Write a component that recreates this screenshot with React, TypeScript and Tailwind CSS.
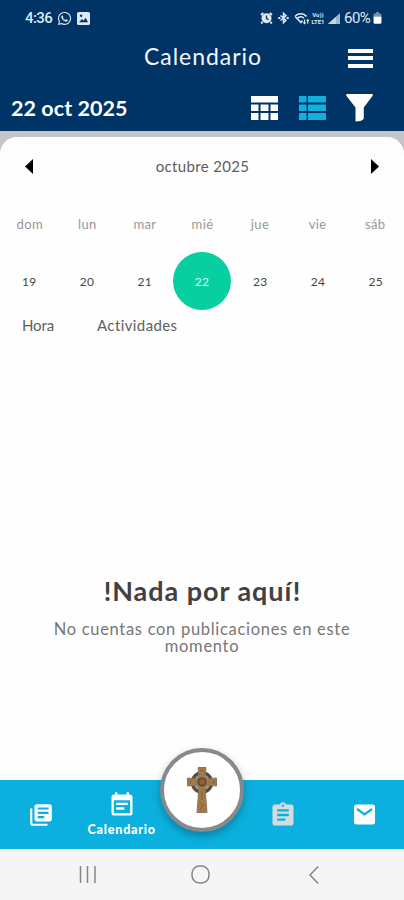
import React from 'react';
import { MdAssignment, MdEventNote, MdLibraryBooks } from 'react-icons/md';
import { FaWhatsapp } from 'react-icons/fa';

const weekDays = ['dom', 'lun', 'mar', 'mié', 'jue', 'vie', 'sáb'];
const days = [19, 20, 21, 22, 23, 24, 25];
const selectedDay = 22;

// Android status bar
const StatusBar: React.FC = () => (
  <div className="flex h-9 items-center justify-between pl-[25px] pr-[22px] text-[#dfe8f5]">
    <div className="flex items-center gap-[5px]">
      <span className="w-[27px] whitespace-nowrap font-['Roboto',sans-serif] text-[15px] font-medium tracking-[-0.6px]">4:36</span>
      <FaWhatsapp className="size-[15px]" />
      <svg className="size-[13px]" viewBox="0 0 12 12">
        <rect width="12" height="12" rx="1.5" fill="currentColor" />
        <path d="M2 9.5 4.6 6.5 6 8 8 5.2 10.2 9.5Z" fill="#003366" />
        <circle cx="3.8" cy="3.5" r="1.1" fill="#003366" />
      </svg>
    </div>
    <div className="flex items-center">
      <svg className="mr-[5px] h-3 w-[13px]" viewBox="0 0 13 12" fill="none" stroke="currentColor">
        <circle cx="6.5" cy="6.3" r="5" fill="currentColor" stroke="none" />
        <path d="M1 3 3.3 1M12 3 9.7 1M2.5 10 1.2 11.5M10.5 10 11.8 11.5" strokeWidth="2" />
        <path d="M6.5 3.5V6.7L8.5 7.7" stroke="#003366" strokeWidth="1.3" />
      </svg>
      <svg className="mr-[5px] h-3 w-[11px]" viewBox="0 0 11 12" fill="none" stroke="currentColor" strokeWidth="1.5">
        <path d="M2.5 3.5 8 8.2 5.5 10.7V1.3L8 3.8 2.5 8.5" />
        <path d="M.3 6h2M8.7 6h2" strokeWidth="2" />
      </svg>
      <svg className="h-[13px] w-4" viewBox="0 0 16 13" fill="none" stroke="currentColor" strokeWidth="1.5">
        <path d="M1 4.5C4 .8 9.5.8 12.5 4.5M3.2 6.5C5.2 4.2 8.3 4.2 10 6.3M1 4.5 7 10.5 8.5 8.5" />
        <path d="M10.5 7.5v4M9.3 10.3l1.2 1.4 1.2-1.4M13.8 11.8v-4M12.6 9l1.2-1.4L15 9" strokeWidth="1.1" />
      </svg>
      <div className="flex w-4 flex-col items-center font-['Roboto',sans-serif] text-[6px] font-bold leading-[7.5px]">
        <span>Vo))</span>
        <span>LTE1</span>
      </div>
      <svg className="ml-[2px] h-[11px] w-3" viewBox="0 0 12 11">
        <path d="M0 11 12 0V11Z" fill="#9fb3c9" />
        <path d="M0 11 8 3.7V11Z" fill="#c8d4e2" />
      </svg>
      <span className="ml-1 w-[28px] whitespace-nowrap font-['Roboto',sans-serif] text-[15px] tracking-[-0.5px]">60%</span>
      <svg className="ml-px h-3 w-[9px]" viewBox="0 0 9 13">
        <path d="M3 0h3v1.5h1.5a1.3 1.3 0 0 1 1.3 1.3V5H.2V2.8a1.3 1.3 0 0 1 1.3-1.3H3Z" fill="#7890ab" />
        <path d="M.2 5h8.6v6.3A1.5 1.5 0 0 1 7.3 12.8H1.7A1.5 1.5 0 0 1 .2 11.3Z" fill="#fff" />
      </svg>
    </div>
  </div>
);

const Header: React.FC = () => (
  <header className="h-[131px] bg-[#003366] text-white">
    <StatusBar />
    <div className="grid h-11 grid-cols-[1fr_auto_1fr] items-center">
      <span />
      <h1 className="pb-1 pl-[2px] text-[23px] leading-7 tracking-[0.95px] text-[#f3f6fb]">Calendario</h1>
      <div className="mr-[31px] flex w-[25px] flex-col gap-[3.5px] justify-self-end [&>span]:h-1 [&>span]:bg-white">
        <span />
        <span />
        <span />
      </div>
    </div>
    <div className="flex h-14 items-center pl-[11px] pr-[31px]">
      <span className="grow pt-px text-[21.5px] font-bold tracking-[0.05px]">22 oct 2025</span>
      <svg className="h-6 w-[27px]" viewBox="0 0 27 24" fill="currentColor">
        <path d="M0 0h27v6.5H0zM0 8.5h7.5v6.5H0zM9.5 8.5h8v6.5h-8zM19.5 8.5H27v6.5h-7.5zM0 17h7.5v7H0zM9.5 17h8v7h-8zM19.5 17H27v7h-7.5z" />
      </svg>
      <svg className="ml-[21px] h-6 w-[27px]" viewBox="0 0 27 24" fill="#13aeda">
        <path d="M0 0h7.5v6.5H0zM9 0h18v6.5H9zM0 8.5h7.5v6.5H0zM9 8.5h18v6.5H9zM0 17h7.5v7H0zM9 17h18v7H9z" />
      </svg>
      <svg className="ml-5 h-7 w-[27px]" viewBox="0 0 27 28" fill="currentColor">
        <path d="M1 0H26Q27.5.5 26.5 2L17.8 13.5V24.5Q16.5 27.5 9.5 27.5V13.5L.5 2Q-.5.5 1 0Z" />
      </svg>
    </div>
  </header>
);

const WeekCalendar: React.FC = () => (
  <section>
    <div className="flex h-[58px] items-center justify-between px-[25px] text-black">
      <svg className="h-[15px] w-2" viewBox="0 0 8 15">
        <path d="M8 0V15L0 7.5Z" fill="currentColor" />
      </svg>
      <span className="pl-px text-[15px] tracking-[0.35px] text-[#5d5d5d]">octubre 2025</span>
      <svg className="h-[15px] w-2" viewBox="0 0 8 15">
        <path d="M0 0V15L8 7.5Z" fill="currentColor" />
      </svg>
    </div>
    <div className="grid h-[57px] grid-cols-7 items-center pl-px pt-[2px] text-center text-[13px] tracking-[0.4px] text-[#989898]">
      {weekDays.map((name) => (
        <span key={name}>{name}</span>
      ))}
    </div>
    <div className="grid grid-cols-7 text-[12px] tracking-[0.3px] text-[#444]">
      {days.map((day) => (
        <div
          key={day}
          className={
            day === selectedDay
              ? 'flex aspect-square items-center justify-center rounded-full bg-[#08cf9f] pt-[2px] text-[#dcfff5]'
              : 'flex aspect-square items-center justify-center pl-px pt-[2px]'
          }
        >
          {day}
        </div>
      ))}
    </div>
    <div className="flex h-[31px] items-center pl-[22px] text-[15px] text-[#606060]">
      <span className="w-[75px] tracking-[-0.1px]">Hora</span>
      <span className="tracking-[0.4px]">Actividades</span>
    </div>
  </section>
);

const CelticCross: React.FC = () => (
  <svg className="h-[46px] w-[30px]" viewBox="0 0 30 46">
    <circle cx="15" cy="15.5" r="9.8" fill="#a0a0a0" stroke="#574a3c" strokeWidth="3" />
    <path
      d="M11 .5h8l-1 9 2.5 2.5 9-1v8l-9-1-2.5 2.5 2 25H10l2-25L9.5 18l-9 1v-8l9 1 2.5-2.5Z"
      fill="#a27a4a"
      stroke="#8a7358"
      strokeWidth="1"
    />
    <circle cx="15" cy="15" r="3.8" fill="#8c6238" stroke="#594634" strokeWidth="1.5" />
    <path d="M13 3.5h4M3.5 13v4M26.5 13v4M15 24v9M13 36l3 3-3 3" fill="none" stroke="#8a653c" strokeWidth="1.3" />
  </svg>
);

const BottomNav: React.FC = () => (
  <nav className="relative grid h-[69px] grid-cols-5 bg-[#0cb0de] text-white">
    <div className="flex items-center justify-center pl-px">
      <MdLibraryBooks className="size-[26px]" />
    </div>
    <div className="flex flex-col items-center pl-px pt-[11px]">
      <MdEventNote className="size-[28px]" />
      <span className="mt-1 text-[12.5px] font-black leading-[14px] tracking-[0.8px]">Calendario</span>
    </div>
    <span />
    <div className="flex items-center justify-center pl-px pt-px">
      <MdAssignment className="size-[28px] text-[#d4dbdc]" />
    </div>
    <div className="flex items-center justify-center pl-px">
      <svg className="size-[21px]" viewBox="0 0 21 21">
        <rect y=".5" width="21" height="20" rx="2.5" fill="currentColor" />
        <path d="M3 5 10.5 10.5 18 5" fill="none" stroke="#0cb0de" strokeWidth="2.2" />
      </svg>
    </div>
    {/* central button over the bar */}
    <div className="absolute -top-8 left-1/2 flex size-[84px] -translate-x-1/2 items-center justify-center rounded-full border-4 border-[#858a8e] bg-white shadow-[0_4px_9px_rgba(0,0,0,0.28)]">
      <CelticCross />
    </div>
  </nav>
);

const SystemBar: React.FC = () => (
  <div className="flex h-[51px] items-center bg-[#f5f5f5] pl-[79px] text-[#858585]">
    <svg className="h-[17px] w-[18px]" viewBox="0 0 18 17" stroke="currentColor" strokeWidth="1.5">
      <path d="M1.5 0V17M8.5 0V17M16 0V17" />
    </svg>
    <svg className="ml-[94px] size-[19px]" viewBox="0 0 19 19" fill="none" stroke="currentColor" strokeWidth="1.5">
      <rect x="1" y="1" width="17" height="17" rx="7.5" />
    </svg>
    <svg className="ml-[99px] h-[18px] w-[10px]" viewBox="0 0 10 18" fill="none" stroke="currentColor" strokeWidth="1.5">
      <path d="M9.2.5 1 9 9.2 17.5" />
    </svg>
  </div>
);

const App: React.FC = () => {
  return (
    <div className="flex h-[900px] w-[404px] flex-col overflow-hidden bg-[#c6c5c9] font-['Lato','Open_Sans',sans-serif]">
      <Header />
      <main className="mt-[6px] flex grow flex-col rounded-t-[17px] bg-[#fefefe]">
        <WeekCalendar />
        <div className="flex grow flex-col items-center pt-[234px] text-center">
          <h2 className="pl-px text-[27px] font-bold leading-8 tracking-[0.95px] text-[#414141]">!Nada por aquí!</h2>
          <p className="mt-[14px] w-[320px] text-[16.5px] leading-[17px] tracking-[0.7px] text-[#777]">
            No cuentas con publicaciones en este momento
          </p>
        </div>
      </main>
      <BottomNav />
      <SystemBar />
    </div>
  );
};

export default App;
